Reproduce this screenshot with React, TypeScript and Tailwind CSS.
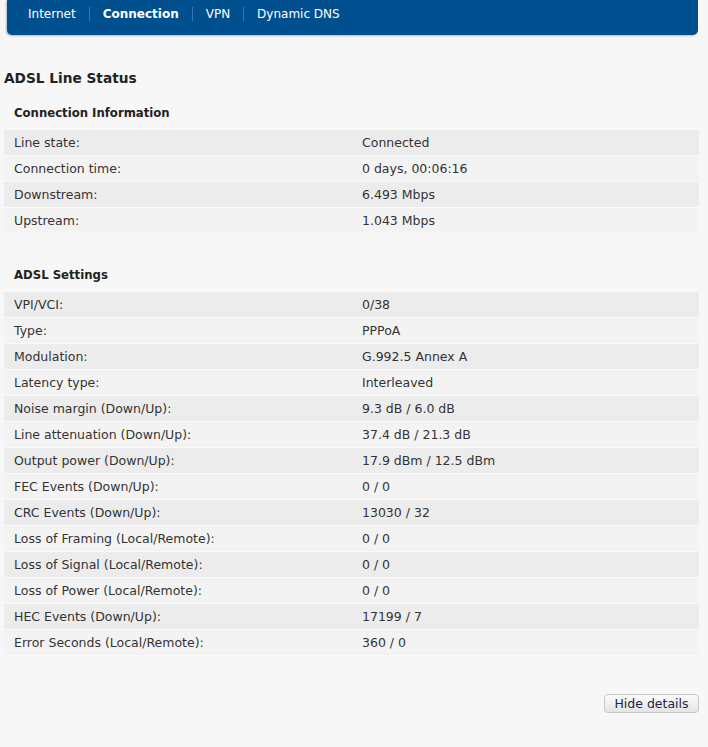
const connectionInfo: [string, string][] = [
  ['Line state:', 'Connected'],
  ['Connection time:', '0 days, 00:06:16'],
  ['Downstream:', '6.493 Mbps'],
  ['Upstream:', '1.043 Mbps'],
]

const adslSettings: [string, string][] = [
  ['VPI/VCI:', '0/38'],
  ['Type:', 'PPPoA'],
  ['Modulation:', 'G.992.5 Annex A'],
  ['Latency type:', 'Interleaved'],
  ['Noise margin (Down/Up):', '9.3 dB / 6.0 dB'],
  ['Line attenuation (Down/Up):', '37.4 dB / 21.3 dB'],
  ['Output power (Down/Up):', '17.9 dBm / 12.5 dBm'],
  ['FEC Events (Down/Up):', '0 / 0'],
  ['CRC Events (Down/Up):', '13030 / 32'],
  ['Loss of Framing (Local/Remote):', '0 / 0'],
  ['Loss of Signal (Local/Remote):', '0 / 0'],
  ['Loss of Power (Local/Remote):', '0 / 0'],
  ['HEC Events (Down/Up):', '17199 / 7'],
  ['Error Seconds (Local/Remote):', '360 / 0'],
]

const tabs = ['Internet', 'Connection', 'VPN', 'Dynamic DNS']

function StatusTable({ rows }: { rows: [string, string][] }) {
  return (
    <div className="ml-[4px] mr-[9px]">
      {rows.map(([label, value], i) => (
        <div
          key={label}
          className={`flex h-[26px] items-center border-b border-[#fafafa] ${i % 2 === 0 ? 'bg-[#ececec]' : 'bg-[#f3f3f3]'}`}
        >
          <div className="w-[358px] pl-[10px]">{label}</div>
          <div>{value}</div>
        </div>
      ))}
    </div>
  )
}

export default function App() {
  return (
    <div
      className="min-h-[747px] bg-[#f7f7f7] text-[12.5px] leading-[16px] text-[#333333]"
      style={{ fontFamily: '"DejaVu Sans", Verdana, sans-serif' }}
    >
      {/* Tab bar */}
      <div className="ml-[7px] mr-[10px] flex h-[35px] items-start rounded-b-[5px] bg-[#00508f] pl-[8px] pt-[6px] shadow-[-1px_1px_2px_rgba(0,0,0,0.25)]">
        {tabs.map((tab, i) => (
          <div key={tab} className="flex items-center">
            {i > 0 && <div className="h-[14px] w-px bg-[#3b77a8]" />}
            <span className={`px-[13px] text-[12px] leading-[16px] text-white ${tab === 'Connection' ? 'font-bold' : ''}`}>
              {tab}
            </span>
          </div>
        ))}
      </div>

      {/* ADSL Line Status */}
      <h1 className="ml-[4px] mt-[34px] text-[13.7px] font-bold leading-[18px] text-[#222222]">ADSL Line Status</h1>

      <h2 className="ml-[14px] mt-[18px] text-[11.7px] font-bold text-[#222222]">Connection Information</h2>
      <div className="mt-[9px]">
        <StatusTable rows={connectionInfo} />
      </div>

      <h2 className="ml-[14px] mt-[33px] text-[11.7px] font-bold text-[#222222]">ADSL Settings</h2>
      <div className="mt-[9px]">
        <StatusTable rows={adslSettings} />
      </div>

      <div className="mr-[9px] mt-[38px] flex justify-end">
        <button className="h-[19px] w-[95px] rounded-[4px] border border-[#c8c8c8] bg-gradient-to-b from-[#fbfbfb] to-[#e4e4e4] text-[12.5px] leading-[16px] text-[#222244]">
          Hide details
        </button>
      </div>
    </div>
  )
}
